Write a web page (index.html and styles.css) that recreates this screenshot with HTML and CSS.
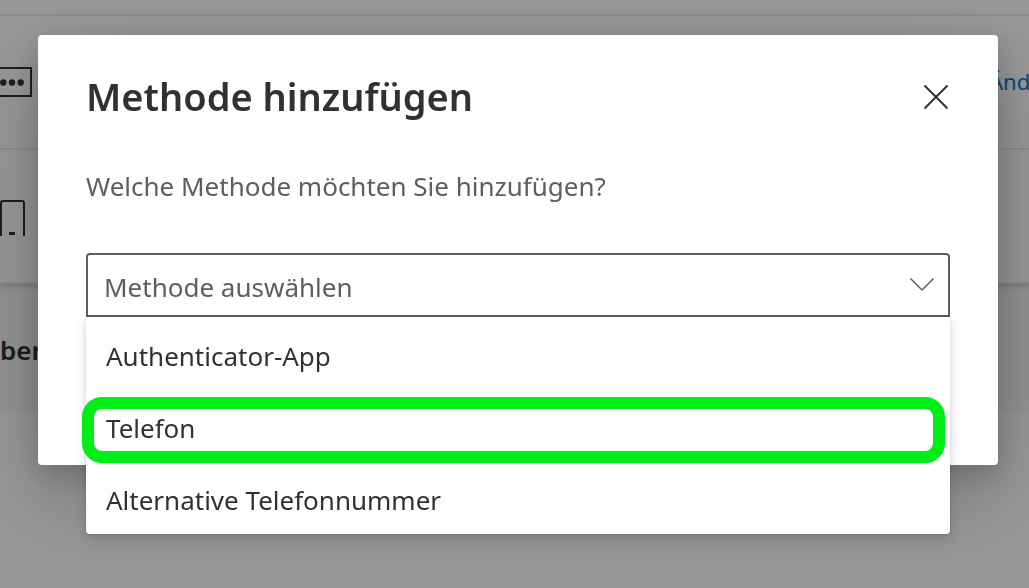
FILE: index.html
```html
<!DOCTYPE html>
<html lang="de">
<head>
    <meta charset="UTF-8">
    <meta name="viewport" content="width=device-width, initial-scale=1.0">
    <title>Methode hinzufügen</title>
    <link rel="stylesheet" href="styles.css">
</head>
<body>
<main class="page">
    <div class="methods">
        <div class="spacer-row"></div>
        <div class="method-row">
            <svg class="icon" width="32" height="32" viewBox="0 0 32 32" aria-hidden="true">
                <path d="M-2 2H31V30H-2" fill="none" stroke="currentColor" stroke-width="2"/>
                <circle cx="3.300" cy="16.500" r="3.200"/>
                <circle cx="12" cy="16.500" r="3.200"/>
                <circle cx="20.700" cy="16.500" r="3.200"/>
            </svg>
            <a class="change-link" href="#">Änd</a>
        </div>
        <div class="method-row">
            <svg class="icon" width="32" height="32" viewBox="0 0 32 32" overflow="visible" aria-hidden="true">
                <path d="M1 36V3Q1 1 3 1H22Q24 1 24 3V36" fill="none" stroke="currentColor" stroke-width="2"/>
                <path d="M9 32H15V35H9Z"/>
            </svg>
        </div>
    </div>
    <p class="lost-device">ben</p>
</main>

<div class="overlay">
    <section class="dialog" role="dialog" aria-labelledby="dialog-title">
        <header class="dialog-header">
            <h1 id="dialog-title">Methode hinzufügen</h1>
            <button class="close" type="button" aria-label="Schließen">
                <svg width="26" height="26" viewBox="0 0 26 26" aria-hidden="true">
                    <path d="M1.500 1.500L24.500 24.500M24.500 1.500L1.500 24.500" fill="none" stroke="currentColor" stroke-width="2"/>
                </svg>
            </button>
        </header>
        <label class="question" for="method">Welche Methode möchten Sie hinzufügen?</label>
        <div class="dropdown">
            <select id="method" name="method">
                <option>Methode auswählen</option>
            </select>
            <svg class="chevron" width="26" height="16" viewBox="0 0 26 16" aria-hidden="true">
                <path d="M1.500 1.500L13 13L24.500 1.500" fill="none" stroke="currentColor" stroke-width="1.500"/>
            </svg>
            <div class="menu">
                <button class="menu-item" type="button">Authenticator-App</button>
                <button class="menu-item marked" type="button">Telefon</button>
                <button class="menu-item" type="button">Alternative Telefonnummer</button>
            </div>
        </div>
    </section>
</div>
</body>
</html>
```

FILE: styles.css
```css
* {
    box-sizing: border-box;
}
body {
    margin: 0;
    min-height: 100vh;
    overflow: hidden;
    background-color: #fcfcfc;
    color: #323130;
    font-family: "Segoe UI", "Noto Sans", sans-serif;
    font-size: 26px;
}
button {
    border: none;
    background: none;
    color: inherit;
    font: inherit;
    cursor: pointer;
}

/* page behind the dialog */
.page {
    height: 412px;
    background-color: #f4f4f4;
}
.methods {
    background-color: #fcfcfc;
    border-bottom: 2px solid #e9e9e9;
    box-shadow: 0 2px 6px rgba(0, 0, 0, 0.2);
}
.spacer-row {
    height: 14px;
}
.method-row {
    display: flex;
    justify-content: space-between;
    align-items: center;
    height: 134px;
    border-top: 2px solid #e9e9e9;
}
.icon {
    fill: currentColor;
}
.change-link {
    width: 40px;
    padding-bottom: 2px;
    color: #0078d4;
    font-size: 22px;
    line-height: 36px;
    text-decoration: none;
}
.lost-device {
    margin: 0;
    padding-top: 48px;
    font-weight: 600;
    line-height: 36px;
}

/* dialog */
.overlay {
    position: fixed;
    inset: 0;
    padding: 35px 31px 0 38px;
    background-color: rgba(0, 0, 0, 0.4);
}
.dialog {
    min-height: 430px;
    padding: 31px 48px;
    background-color: #fff;
    border-radius: 4px;
    box-shadow: 0 32px 90px rgba(0, 0, 0, 0.22), 0 10px 28px rgba(0, 0, 0, 0.18);
}
.dialog-header {
    display: flex;
    justify-content: space-between;
    align-items: center;
    margin-bottom: 36px;
}
h1 {
    margin: 0;
    font-size: 38px;
    font-weight: 600;
    line-height: 60px;
}
.close {
    display: flex;
    padding: 2px 1px 0 0;
}
.question {
    display: block;
    margin-bottom: 43px;
    color: #605e5c;
    line-height: 48px;
}
.dropdown {
    position: relative;
}
select {
    display: block;
    width: 100%;
    height: 64px;
    padding: 4px 60px 0 16px;
    appearance: none;
    border: 2px solid #605e5c;
    border-radius: 4px 4px 0 0;
    background-color: #fff;
    color: #605e5c;
    font: inherit;
}
.chevron {
    position: absolute;
    top: 24px;
    right: 15px;
    color: #605e5c;
    pointer-events: none;
}
.menu {
    position: absolute;
    top: 100%;
    left: 0;
    right: 0;
    padding-bottom: 1px;
    background-color: #fff;
    border-radius: 0 0 4px 4px;
    box-shadow: 0 6px 14px rgba(0, 0, 0, 0.13), 0 1px 4px rgba(0, 0, 0, 0.11);
}
.menu-item {
    position: relative;
    display: block;
    width: 100%;
    height: 72px;
    padding: 6px 20px 0;
    text-align: left;
}
.marked::after {
    content: "";
    position: absolute;
    top: 8px;
    right: 5px;
    bottom: -2px;
    left: -4px;
    border: 12px solid #00ed17;
    border-radius: 20px;
}
```
